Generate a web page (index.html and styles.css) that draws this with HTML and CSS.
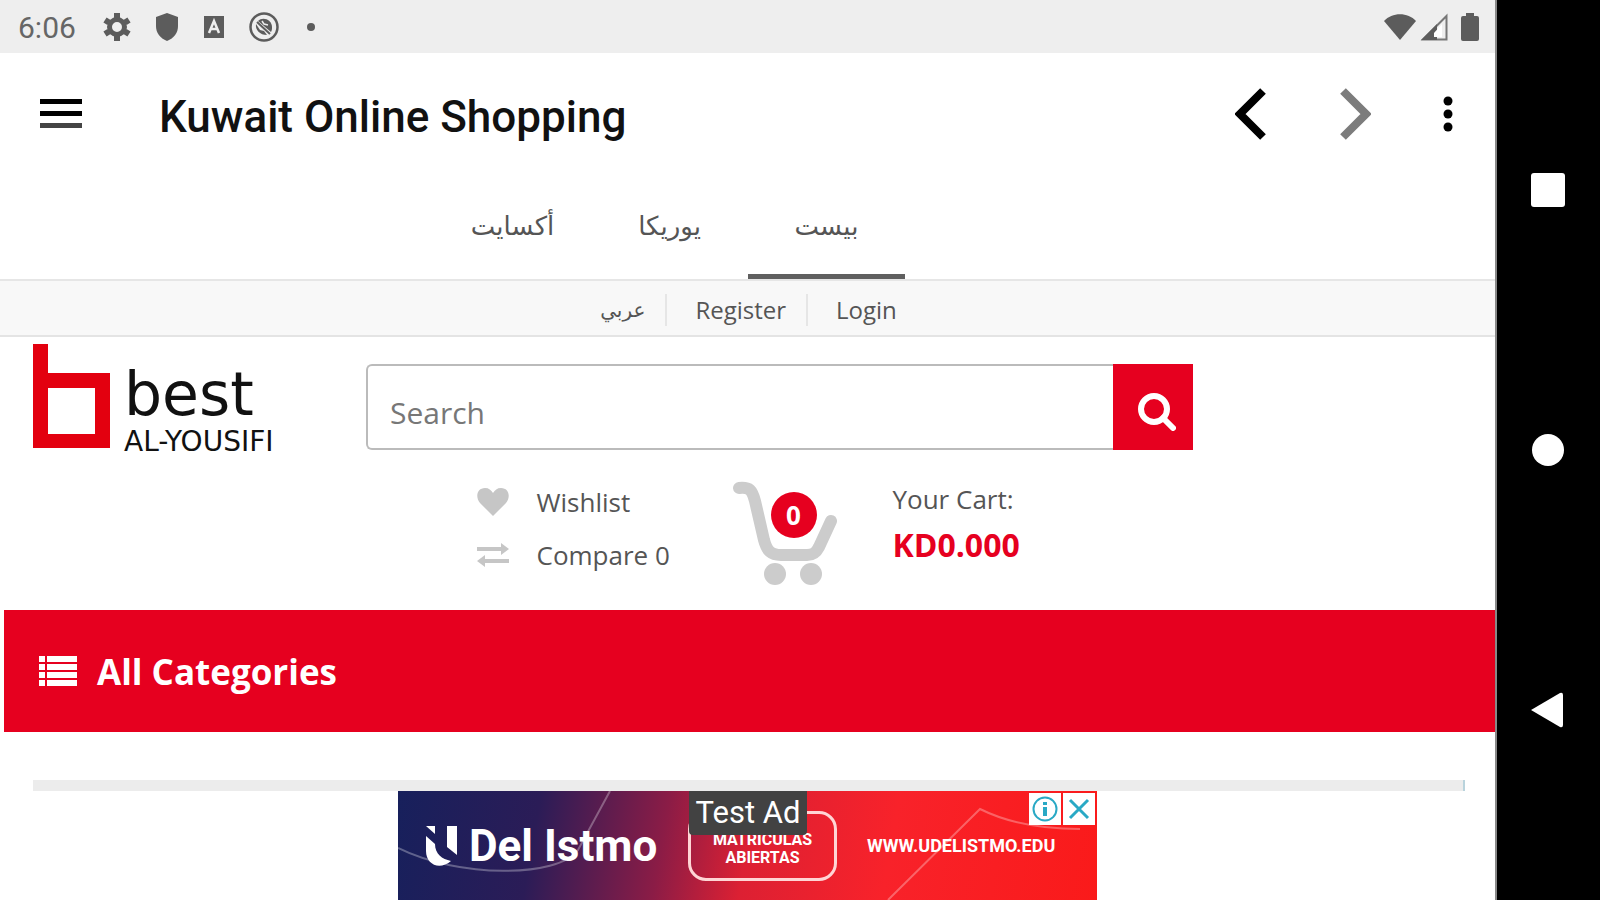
FILE: index.html
```html
<!DOCTYPE html>
<html lang="en">
<head>
  <meta charset="UTF-8">
  <meta name="viewport" content="width=device-width, initial-scale=1.0">
  <title>Kuwait Online Shopping</title>
  <link rel="stylesheet" href="styles.css">
</head>
<body>
  <div class="screen">
    <div class="status-bar">
      <span class="clock">6:06</span>
      <div class="status-icons">
        <svg width="28" height="28" viewBox="0 0 28 28"><circle cx="14" cy="14" r="7.5" fill="none" stroke="#5c5c5c" stroke-width="5"/><g stroke="#5c5c5c" stroke-width="6"><path d="M14 0v5M14 23v5M2 7l4 2.500M22 18.500l4 2.500M26 7l-4 2.500M6 18.500l-4 2.500"/></g></svg>
        <svg width="24" height="28" viewBox="0 0 24 28"><path d="M12 0l11 4v9c0 7-4 12-11 15C5 25 1 20 1 13V4z" fill="#5c5c5c"/></svg>
        <svg width="22" height="22" viewBox="0 0 22 22"><path d="M1 0h20v22H1z" fill="#5c5c5c"/><path d="M6 17l5-12 5 12M8 13h6" fill="none" stroke="#eee" stroke-width="2.500"/></svg>
        <svg width="30" height="30" viewBox="0 0 30 30"><circle cx="15" cy="15" r="13.500" fill="none" stroke="#5c5c5c" stroke-width="2.500"/><path d="M9 9c5-5 14-1 14 6 0 2 0 3-1 5z" fill="#5c5c5c"/><path d="M7 12c-1 6 4 11 11 11l-3-4-4-1z" fill="#5c5c5c"/><path d="M8 10l13 12" stroke="#5c5c5c" stroke-width="2"/><path d="M13 9l2 3 4 1" fill="none" stroke="#eee" stroke-width="1.500"/></svg>
        <svg class="dot" width="8" height="8" viewBox="0 0 8 8"><circle cx="4" cy="4" r="4" fill="#5c5c5c"/></svg>
      </div>
      <div class="signal-icons">
        <svg width="32" height="28" viewBox="0 0 32 28"><path d="M0 8C8-1 24-1 32 8L16 27z" fill="#5c5c5c"/></svg>
        <svg width="28" height="28" viewBox="0 0 28 28"><path d="M3 26.500L26.500 3v23.500z" fill="#eee" stroke="#777" stroke-width="2"/><path d="M1 27L17 11v16z" fill="#5c5c5c"/><path d="M14 20l8-9v13h-8z" fill="#fff"/></svg>
        <svg width="18" height="28" viewBox="0 0 18 28"><path d="M5 0h8v3h3q2 0 2 2v21q0 2-2 2H2q-2 0-2-2V5q0-2 2-2h3z" fill="#5c5c5c"/></svg>
      </div>
    </div>

    <header class="app-bar">
      <button class="icon-btn" aria-label="Menu">
        <svg width="42" height="30" viewBox="0 0 42 30"><path d="M0 0h42v5H0zM0 12h42v5H0z"/><path d="M0 24h42v5H0z" fill="#444"/></svg>
      </button>
      <h1 class="app-title">Kuwait Online Shopping</h1>
      <div class="app-actions">
        <button class="icon-btn" aria-label="Back">
          <svg width="32" height="52" viewBox="0 0 32 52"><path d="M28 3L5 26l23 23" fill="none" stroke="#000" stroke-width="8"/></svg>
        </button>
        <button class="icon-btn" aria-label="Forward">
          <svg width="32" height="52" viewBox="0 0 32 52"><path d="M4 3l23 23L4 49" fill="none" stroke="#7c7c7c" stroke-width="8"/></svg>
        </button>
        <button class="icon-btn" aria-label="More options">
          <svg width="10" height="36" viewBox="0 0 10 36"><circle cx="5" cy="5" r="4.500"/><circle cx="5" cy="18" r="4.500"/><circle cx="5" cy="31" r="4.500"/></svg>
        </button>
      </div>
    </header>

    <nav class="tabs" lang="ar">
      <button class="tab">أكسايت</button>
      <button class="tab">يوريكا</button>
      <button class="tab active">بيست</button>
    </nav>

    <main class="shop">
      <div class="user-links">
        <a class="arabic" href="#" lang="ar">عربي</a>
        <a href="#">Register</a>
        <a href="#">Login</a>
      </div>

      <div class="shop-header">
        <a class="logo" href="#">
          <svg width="77" height="104" viewBox="0 0 77 104"><path d="M0 0h15v29h62v75H0zM15 44v46h47V44z" fill="#e3000f" fill-rule="evenodd"/></svg>
          <span class="logo-text">
            <span class="logo-name">best</span>
            <span class="logo-sub">AL-YOUSIFI</span>
          </span>
        </a>
        <form class="search">
          <input type="text" placeholder="Search" aria-label="Search">
          <button type="button" aria-label="Search">
            <svg width="38" height="38" viewBox="0 0 38 38"><circle cx="16" cy="16" r="13" fill="none" stroke="#fff" stroke-width="6"/><path d="M25 25l10 10" stroke="#fff" stroke-width="6" stroke-linecap="round"/></svg>
          </button>
        </form>
      </div>

      <div class="shop-info">
        <div class="lists">
          <a href="#">
            <svg width="32" height="28" viewBox="0 0 32 28"><path d="M16 28L3 15C-2 9 0 0 8 0c4 0 6 2 8 5 2-3 4-5 8-5 8 0 10 9 5 15z" fill="#c6c6c6"/></svg>
            Wishlist
          </a>
          <a href="#">
            <svg width="32" height="24" viewBox="0 0 32 24"><path d="M0 4h24V0l8 6-8 6V8H0zM32 16H8v-4l-8 6 8 6v-4h24z" fill="#c6c6c6"/></svg>
            Compare 0
          </a>
        </div>
        <a class="cart" href="#" aria-label="Cart">
          <svg width="106" height="104" viewBox="0 0 106 104"><path d="M6 7c11-1 13 2 16 13l9 39c3 11 7 15 17 15h26c6 0 9-2 12-8l12-26" fill="none" stroke="#ccc" stroke-width="12" stroke-linecap="round" stroke-linejoin="round"/><circle cx="42" cy="93" r="11" fill="#ccc"/><circle cx="78" cy="93" r="11" fill="#ccc"/></svg>
          <span class="badge">0</span>
        </a>
        <div class="cart-total">
          <span>Your Cart:</span>
          <strong>KD0.000</strong>
        </div>
      </div>

      <button class="categories">
        <svg width="38" height="30" viewBox="0 0 38 30" fill="#fff"><path d="M0 0h6v6H0zM0 8h6v6H0zM0 16h6v6H0zM0 24h6v6H0zM8 0h30v6H8zM8 8h30v6H8zM8 16h30v6H8zM8 24h30v6H8z"/></svg>
        All Categories
      </button>

      <div class="slider"></div>
    </main>

    <footer class="ad-bar">
      <div class="ad">
        <svg class="ad-lines" width="699" height="109" viewBox="0 0 699 109" fill="none" stroke="#fff" stroke-opacity=".3" stroke-width="2"><path d="M0 57c60 30 160 30 180 2L212 0M490 109L582 18q40 20 100 20"/></svg>
        <div class="ad-brand">
          <svg width="32" height="42" viewBox="0 0 32 42" fill="#fff"><path d="M1 1h9v8zM1 11l9 8c0 10 7 15 16 17-12 10-25 3-25-10zM22 1h10v29l-10-8z"/></svg>
          Del Istmo
        </div>
        <div class="ad-box">MATRICULAS<br>ABIERTAS</div>
        <div class="ad-url">WWW.UDELISTMO.EDU</div>
        <span class="ad-label">Test Ad</span>
        <div class="ad-choices">
          <button aria-label="Ad information">
            <svg width="28" height="28" viewBox="0 0 28 28"><circle cx="14" cy="14" r="11.500" fill="none" stroke="#29a9c5" stroke-width="2"/><path d="M12 7h4v3h-4zM12 12h4v9h-4z" fill="#29a9c5"/></svg>
          </button>
          <button aria-label="Close ad">
            <svg width="28" height="28" viewBox="0 0 28 28"><path d="M5 5l18 18M23 5L5 23" stroke="#29a9c5" stroke-width="3"/></svg>
          </button>
        </div>
      </div>
    </footer>
  </div>

  <div class="nav-bar">
    <button aria-label="Recent apps"><svg width="36" height="36" viewBox="0 0 36 36"><rect x="1" y="1" width="34" height="34" rx="3" fill="#fff"/></svg></button>
    <button aria-label="Home"><svg width="36" height="36" viewBox="0 0 36 36"><circle cx="18" cy="18" r="16" fill="#fff"/></svg></button>
    <button aria-label="Back"><svg width="36" height="36" viewBox="0 0 36 36"><path d="M1 18L30 1q3-1 3 2v30q0 3-3 2z" fill="#fff"/></svg></button>
  </div>
</body>
</html>
```
FILE: styles.css
```css
* {
  box-sizing: border-box;
}

body {
  margin: 0;
  display: flex;
  height: 100vh;
  overflow: hidden;
  background-color: white;
  font-family: "Open Sans", "DejaVu Sans", sans-serif;
  color: #555;
}

button {
  border: none;
  padding: 0;
  background: none;
  font-family: inherit;
  cursor: pointer;
}

a {
  color: inherit;
  text-decoration: none;
}

svg {
  display: block;
  flex-shrink: 0;
}

.screen {
  flex: 1;
  min-width: 0;
  display: flex;
  flex-direction: column;
}

/* Status bar */
.status-bar {
  display: flex;
  align-items: center;
  height: 53px;
  padding: 0 16px 0 18px;
  background-color: #eee;
}

.clock {
  width: 85px;
  padding-top: 2px;
  font: 30px Roboto, sans-serif;
  color: #666;
}

.status-icons {
  display: flex;
  align-items: center;
  gap: 24px;
}

.status-icons .dot {
  margin-left: 4px;
}

.signal-icons {
  display: flex;
  gap: 4px;
  margin-left: auto;
}

.signal-icons svg:last-child {
  margin-left: 9px;
}

/* App bar */
.app-bar {
  display: flex;
  align-items: center;
  height: 122px;
  padding: 0 42px 0 40px;
}

.app-title {
  margin: 0 0 0 77px;
  padding-top: 5px;
  font: 500 44px Roboto, sans-serif;
  color: #111;
}

.app-actions {
  display: flex;
  align-items: center;
  gap: 72px;
  margin-left: auto;
}

/* Tabs */
.tabs {
  display: flex;
  justify-content: center;
  height: 106px;
  padding-right: 156px;
  border-bottom: 2px solid #e6e6e6;
}

.tab {
  width: 157px;
  border-bottom: 5px solid transparent;
  font-size: 26px;
  color: #555;
}

.tab.active {
  border-bottom-color: #5f5f5f;
}

/* Shop page */
.shop {
  flex: 1;
  min-height: 0;
  overflow: hidden;
  display: flex;
  flex-direction: column;
}

.user-links {
  display: flex;
  flex-shrink: 0;
  justify-content: center;
  align-items: center;
  height: 56px;
  padding: 4px 6px 0 0;
  background-color: #f8f8f8;
  border-bottom: 2px solid #e4e4e4;
  font-size: 24px;
}

.user-links a {
  padding: 0 20px 0 28px;
  line-height: 32px;
}

.user-links a + a {
  border-left: 2px solid #e6e6e6;
}

.user-links .arabic {
  font-size: 20px;
}

.shop-header {
  display: flex;
  align-items: flex-start;
  height: 113px;
  padding: 7px 302px 0 33px;
}

.logo {
  display: flex;
  align-items: flex-start;
  width: 333px;
  gap: 14px;
  color: #111;
}

.logo-text {
  display: flex;
  flex-direction: column;
  padding-top: 18px;
  font-family: "DejaVu Sans", sans-serif;
}

.logo-name {
  font-size: 60px;
  line-height: 64px;
}

.logo-sub {
  font-size: 28px;
  line-height: 32px;
}

.search {
  display: flex;
  flex: 1;
  height: 86px;
  margin-top: 20px;
}

.search input {
  flex: 1;
  min-width: 0;
  padding: 10px 22px 0;
  border: 2px solid #bbb;
  border-right: none;
  border-radius: 6px 0 0 6px;
  font: 30px "Open Sans", sans-serif;
}

.search input::placeholder {
  color: #777;
}

.search button {
  display: flex;
  align-items: center;
  justify-content: center;
  width: 80px;
  padding: 10px 0 0 8px;
  background-color: #e6001f;
}

.shop-info {
  display: flex;
  justify-content: center;
  height: 160px;
  padding: 31px 0 0 8px;
}

.lists {
  display: flex;
  flex-direction: column;
  gap: 17px;
  width: 256px;
  padding-top: 3px;
  font-size: 26px;
  line-height: 36px;
}

.lists a {
  display: flex;
  align-items: center;
  gap: 28px;
}

.cart {
  position: relative;
  width: 160px;
}

.badge {
  position: absolute;
  top: 11px;
  left: 38px;
  width: 46px;
  height: 46px;
  border-radius: 50%;
  background-color: #e6001f;
  color: white;
  font-size: 26px;
  font-weight: bold;
  line-height: 46px;
  text-align: center;
}

.cart-total {
  display: flex;
  flex-direction: column;
  gap: 10px;
  width: 134px;
  font-size: 26px;
  line-height: 36px;
}

.cart-total strong {
  font-size: 32px;
  color: #e6001f;
}

.categories {
  display: flex;
  flex-shrink: 0;
  align-items: center;
  gap: 20px;
  height: 122px;
  margin-left: 4px;
  padding-left: 35px;
  background-color: #e6001f;
  color: white;
  font-size: 35px;
  font-weight: bold;
}

.slider {
  flex: 1;
  margin: 48px 30px 0 33px;
  background-color: #ececec;
  border-right: 2px solid #b9d3dc;
}

/* Ad banner */
.ad-bar {
  display: flex;
  justify-content: center;
  height: 109px;
}

.ad {
  position: relative;
  display: flex;
  align-items: center;
  width: 699px;
  padding-left: 27px;
  background: linear-gradient(100deg, #17205c 0%, #2b1c57 20%, #8b1c46 38%, #dc2033 50%, #f8222a 70%, #fa1a1a 100%);
  color: white;
  font-family: Roboto, sans-serif;
  font-weight: bold;
}

.ad-lines {
  position: absolute;
  top: 0;
  left: 0;
}

.ad-brand {
  display: flex;
  flex-shrink: 0;
  align-items: center;
  gap: 12px;
  width: 263px;
  font-size: 44px;
  white-space: nowrap;
}

.ad-box {
  flex-shrink: 0;
  width: 149px;
  height: 70px;
  padding-top: 17px;
  border: 3px solid #ffd5d5;
  border-radius: 18px;
  font-size: 16px;
  line-height: 18px;
  text-align: center;
}

.ad-url {
  margin-left: 30px;
  font-size: 18px;
}

.ad-label {
  position: absolute;
  top: 0;
  left: 291px;
  width: 118px;
  border-radius: 0 0 4px 4px;
  background-color: #424242;
  font: 31px/44px Roboto, sans-serif;
  text-align: center;
}

.ad-choices {
  position: absolute;
  top: 2px;
  right: 2px;
  display: flex;
  gap: 2px;
}

.ad-choices button {
  padding: 2px;
  background-color: white;
}

/* Android navigation buttons */
.nav-bar {
  display: flex;
  flex-direction: column;
  align-items: center;
  justify-content: space-between;
  width: 105px;
  padding: 172px 2px 172px 0;
  border-left: 2px solid #888;
  background-color: black;
}
```
